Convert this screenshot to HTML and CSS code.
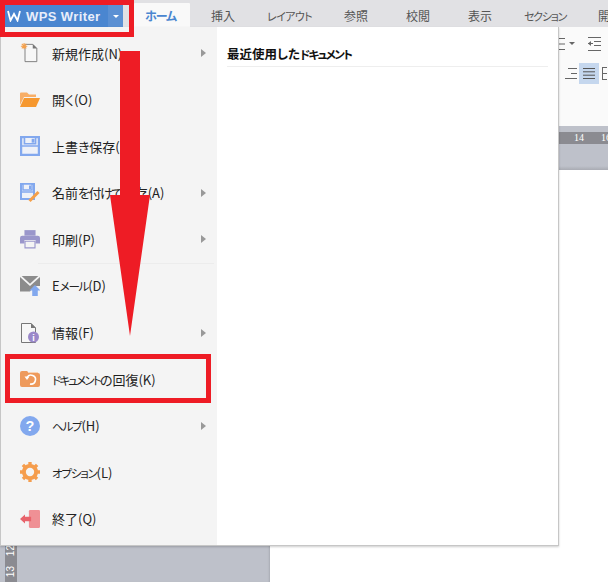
FILE: index.html
```html
<!DOCTYPE html>
<html lang="ja">
<head>
<meta charset="utf-8">
<title>WPS Writer</title>
<link rel="stylesheet" href="styles.css">
</head>
<body>
<div class="app">
  <header class="topbar">
    <div class="appbtn">
      <svg class="logo" viewBox="0 0 14 12" width="14" height="12"><path d="M1 1 3.500 10.500 7 4 10.500 10.500 13 1" fill="none" stroke="#fff" stroke-width="1.800"/></svg>
      <span class="appname">WPS Writer</span>
      <span class="appcaret"><i></i></span>
    </div>
    <nav class="tabs">
      <span class="tab active">ホーム</span>
      <span class="tab">挿入</span>
      <span class="tab"><span class="tabkana">レイアウト</span></span>
      <span class="tab">参照</span>
      <span class="tab">校閲</span>
      <span class="tab">表示</span>
      <span class="tab"><span class="tabkana narrow">セクション</span></span>
      <span class="tab">開発</span>
    </nav>
  </header>
  <section class="ribbon">
    <div class="toolrow first">
      <svg width="17" height="14" viewBox="0 0 17 14"><path d="M0 1.500H6M0 7H6M0 12.500H6" stroke="#666" stroke-width="1"/><path d="M10 5h6l-3 3z" fill="#666"/></svg>
      <svg width="13" height="14" viewBox="0 0 13 14"><path d="M0 .5H13M6 4.500H13M6 8.500H13M0 13.500H13M0 6.500H5" stroke="#666" fill="none"/><path d="M0 6.500 3 4v5z" fill="#666"/></svg>
      <svg width="13" height="14" viewBox="0 0 13 14"><path d="M0 .5H13M0 4.500H7M0 8.500H7M0 13.500H13" stroke="#666" fill="none"/></svg>
    </div>
    <div class="toolrow second">
      <svg width="13" height="11" viewBox="0 0 13 11"><path d="M4 .5H13M7 5.500H13M1 10.500H13" stroke="#666" fill="none"/></svg>
      <span class="toolbox"><svg width="12" height="11" viewBox="0 0 12 11"><path d="M0 .5H12M0 3.800H12M0 7.200H12M0 10.500H12" stroke="#555" fill="none"/></svg></span>
      <svg width="5" height="13" viewBox="0 0 5 13"><path d="M.5 0V13M.5 .5H5M.5 6.500H5M.5 12.500H5" stroke="#666" fill="none"/></svg>
    </div>
  </section>
  <section class="hruler">
    <div class="rulerstrip"><span>14</span><span>16</span></div>
  </section>
  <main class="workspace">
    <aside class="gutter">
      <div class="vruler"><span>12</span><span>13</span></div>
    </aside>
    <div class="page"></div>
  </main>
</div>

<div class="menu">
  <ul class="menulist">
    <li class="item sub">
      <svg class="ico" viewBox="0 0 20 22"><path d="M4.500 1.500H13L17.500 6V20.500H4.500Z" fill="#f7f7f7" stroke="#777"/><path d="M13 1 18 6H13Z" fill="#777"/><path d="M0 3.500H7M3.500 0V7M1 1 6 6M6 1 1 6" stroke="#f5a04a" stroke-width="1.200"/></svg>
      <span>新規作成(N)</span>
    </li>
    <li class="item">
      <svg class="ico" viewBox="0 0 20 16"><path d="M0 1.500Q0 .5 1 .5H7L9 2.500H16V5H4L0 13Z" fill="#f8ae66"/><path d="M4 6H20L16 15H0Z" fill="#f6982f"/></svg>
      <span>開く(O)</span>
    </li>
    <li class="item">
      <svg class="ico" viewBox="0 0 18 18"><path d="M1 1H17V17H1Z" fill="#eef1f8" stroke="#82a8ee" stroke-width="2"/><path d="M4 1H14V7H4ZM1 9H17" fill="#eef1f8" stroke="#82a8ee" stroke-width="1.500"/><path d="M10.500 2.500H13V6H10.500Z" fill="#82a8ee"/></svg>
      <span>上書き保存(S)</span>
    </li>
    <li class="item sub">
      <svg class="ico" viewBox="0 0 20 20"><path d="M1 1H14V16H1Z" fill="#eef1f8" stroke="#82a8ee" stroke-width="2"/><path d="M3 1H12V7H3ZM1 9H14" fill="#eef1f8" stroke="#82a8ee" stroke-width="1.500"/><path d="M9 2.500H11V6H9Z" fill="#82a8ee"/><path d="M9.500 18 18.500 9" stroke="#f5a04a" stroke-width="3"/></svg>
      <span>名前<span class="tight">を付けて</span>保存(A)</span>
    </li>
    <li class="item sub">
      <svg class="ico" viewBox="0 0 18 18"><path d="M4 1H14V6H4Z" fill="#9a96cb"/><path d="M2 6H16Q18 6 18 8V13H14V10H4V13H0V8Q0 6 2 6Z" fill="#9a96cb"/><path d="M4.500 11H13.500V17H4.500Z" fill="#f4f4f4" stroke="#9a96cb"/></svg>
      <span>印刷(P)</span>
    </li>
    <li class="item sep">
      <svg class="ico" viewBox="0 0 18 18"><path d="M0 1 9 9 18 1V9H13L9 14H0Z" fill="#8c8c8c"/><path d="M1.500 0H16.500L9 7Z" fill="#8c8c8c"/><path d="M13.500 8 18.500 13H16V18H11V13H8.500Z" fill="#82a8ee"/></svg>
      <span>E<span class="kana">メール</span>(D)</span>
    </li>
    <li class="item sub">
      <svg class="ico" viewBox="0 0 18 20"><path d="M.5 .5H10L14.500 5V19.500H.5Z" fill="#f7f7f7" stroke="#777"/><path d="M10 0 15 5H10Z" fill="#777"/><circle cx="12.500" cy="14" r="5.500" fill="#9a88c9"/><text class="icotxt" x="12.500" y="17.500" font-size="9">i</text></svg>
      <span>情報(F)</span>
    </li>
    <li class="item">
      <svg class="ico" viewBox="0 0 20 16"><path d="M0 2Q0 0 2 0H7L9 2H18Q20 2 20 4V14Q20 16 18 16H2Q0 16 0 14Z" fill="#ee9a5c"/><path d="M8 1.500H18" stroke="#f9d3b4"/><path d="M7 6.500A4.500 4.500 0 1 1 10 13" fill="none" stroke="#fff" stroke-width="1.600"/><path d="M4.500 5.500H9.500L7 9Z" fill="#fff"/></svg>
      <span><span class="kana wide">ドキュメント</span>の回復(K)</span>
    </li>
    <li class="item sub">
      <svg class="ico" viewBox="0 0 18 18"><circle cx="9" cy="9" r="9" fill="#82a8ee"/><text class="icotxt" x="9" y="13.500" font-size="13">?</text></svg>
      <span><span class="kana">ヘルプ</span>(H)</span>
    </li>
    <li class="item">
      <svg class="ico" viewBox="0 0 18 18"><circle cx="9" cy="9" r="5.500" fill="none" stroke="#f59d4d" stroke-width="3.500"/><path d="M9 0V18M0 9H18M2.600 2.600 15.400 15.400M15.400 2.600 2.600 15.400" stroke="#f59d4d" stroke-width="3" stroke-dasharray="3 12"/></svg>
      <span><span class="kana">オプション</span>(L)</span>
    </li>
    <li class="item">
      <svg class="ico" viewBox="0 0 18 16"><path d="M8 1Q8 0 9 0H17Q18 0 18 1V15Q18 16 17 16H9Q8 16 8 15Z" fill="#ef9095"/><path d="M0 8 4.500 4V6H10V10H4.500V12Z" fill="#e8636b"/></svg>
      <span>終了(Q)</span>
    </li>
  </ul>
  <div class="recent">
    <h2 class="recent-title">最近使用した<span class="kana title-kana">ドキュメント</span></h2>
  </div>
</div>

<div class="mark mark-app"></div>
<div class="mark mark-recover"></div>
<svg class="bigarrow" viewBox="0 0 40 285" width="40" height="285"><path d="M10 0H30V144H40L20 285 0 144H10Z" fill="#ee1c25"/></svg>
</body>
</html>
```

FILE: styles.css
```css
* { box-sizing: border-box; }
html, body { margin: 0; height: 100%; overflow: hidden; }
body { font-family: "Noto Sans CJK JP", "Liberation Sans", sans-serif; font-feature-settings: "palt"; background: #fff; position: relative; }

.app { display: flex; flex-direction: column; height: 582px; width: 608px; }

.topbar { height: 27px; flex: none; background: #e1e1e4; display: flex; align-items: flex-end; padding-left: 5px; overflow: hidden; }
.appbtn { width: 118px; height: 22px; flex: none; background: #4a86d0; display: flex; align-items: center; padding-left: 2px; }
.logo { flex: none; }
.appname { font-family: "Liberation Sans", sans-serif; font-weight: bold; font-size: 13px; letter-spacing: .4px; color: #e9eefa; margin-left: 5px; white-space: nowrap; }
.appcaret { margin-left: auto; width: 15px; height: 22px; flex: none; background: #5b90d3; display: flex; align-items: center; justify-content: center; }
.appcaret i { width: 0; height: 0; border: 3px solid transparent; border-top: 3px solid #fff; border-bottom: 0; }

.tabs { display: flex; flex: none; margin-left: 11px; height: 24px; }
.tab { min-width: 62px; padding: 0 13px; font-size: 12px; line-height: 26px; color: #555; text-align: center; white-space: nowrap; flex: none; }
.tab.active { min-width: 56px; width: 56px; padding: 0 3px 0 0; margin-right: 2px; background: #f9f9f9; color: #4a86d0; font-weight: bold; letter-spacing: -1px; border-radius: 1px 1px 0 0; }
.tabkana { font-size: 11px; letter-spacing: -.6px; }
.tabkana.narrow { letter-spacing: -1.300px; }

.ribbon { height: 99px; flex: none; background: #fafafa; padding-left: 559px; display: flex; flex-direction: column; overflow: hidden; }
.toolrow { display: flex; align-items: center; flex: none; white-space: nowrap; }
.toolrow svg { flex: none; display: block; }
.toolrow.first { margin-top: 10px; gap: 12px; }
.toolrow.second { margin-top: 12px; padding-left: 5px; }
.toolbox { width: 20px; height: 21px; margin: 0 3px 0 2px; background: #c5d7ee; display: flex; align-items: center; justify-content: center; flex: none; }

.hruler { height: 44px; flex: none; background: linear-gradient(#bec1ca 0, #bec1ca 40px, #a9abb3 100%); padding-top: 6px; overflow: hidden; }
.rulerstrip { height: 12px; background: #8b8b91; display: flex; justify-content: flex-end; gap: 17px; font-family: "Liberation Serif", serif; font-size: 10px; line-height: 12px; color: #fff; margin-right: -3px; }

.workspace { flex: 1; display: flex; min-height: 0; }
.gutter { width: 270px; flex: none; background: #bec1ca; padding-left: 5px; box-shadow: inset -2px 0 2px -1px #a9abb3; }
.vruler { width: 12px; height: 100%; background: #8b8b91; display: flex; flex-direction: column; justify-content: flex-end; align-items: center; gap: 10px; padding-bottom: 5px; font-family: "Liberation Sans", sans-serif; font-size: 10px; color: #fff; }
.vruler span { writing-mode: vertical-rl; transform: rotate(180deg); line-height: 12px; }
.page { flex: 1; background: #fff; }

.menu { position: absolute; left: 0; top: 27px; width: 559px; height: 519px; background: #fff; border: 1px solid #c6c6c6; border-top: 0; box-shadow: 0 1px 2px rgba(0,0,0,.2); display: flex; }
.menulist { list-style: none; margin: 0; padding: 3px 0; width: 216px; flex: none; background: #f4f4f4; display: grid; grid-template-rows: repeat(11, 1fr); }
.item { position: relative; display: flex; align-items: center; padding-left: 19px; font-size: 13px; color: #222; white-space: nowrap; }
.item > span { margin-left: 12px; }
.kana { font-size: 11.500px; letter-spacing: -1.200px; }
.kana.wide { letter-spacing: -1.800px; }
.tight { letter-spacing: -1.500px; }
.ico { width: 20px; height: 20px; flex: none; display: block; }
.icotxt { fill: #fff; font-family: "Liberation Sans", sans-serif; font-weight: bold; text-anchor: middle; }
.item.sub::after { content: ""; position: absolute; left: 200px; top: 50%; margin-top: -4px; border: 4px solid transparent; border-left: 5px solid #999; border-right: 0; }
.item.sep::before { content: ""; position: absolute; left: 37px; right: 3px; top: 0; height: 1px; background: #ececec; }

.recent { flex: 1; padding: 17px 10px 0 10px; }
.recent-title { margin: 0; padding-bottom: 2px; font-size: 12.500px; line-height: 20px; font-weight: bold; color: #111; border-bottom: 1px solid #eee; }
.kana.title-kana { letter-spacing: -1.600px; }

.mark { position: absolute; border: 5px solid #ee1c25; }
.mark-app { left: 0; top: 0; width: 134px; height: 37px; }
.mark-recover { left: 5px; top: 354px; width: 206px; height: 49px; }
.bigarrow { position: absolute; left: 110px; top: 51px; display: block; }
```
